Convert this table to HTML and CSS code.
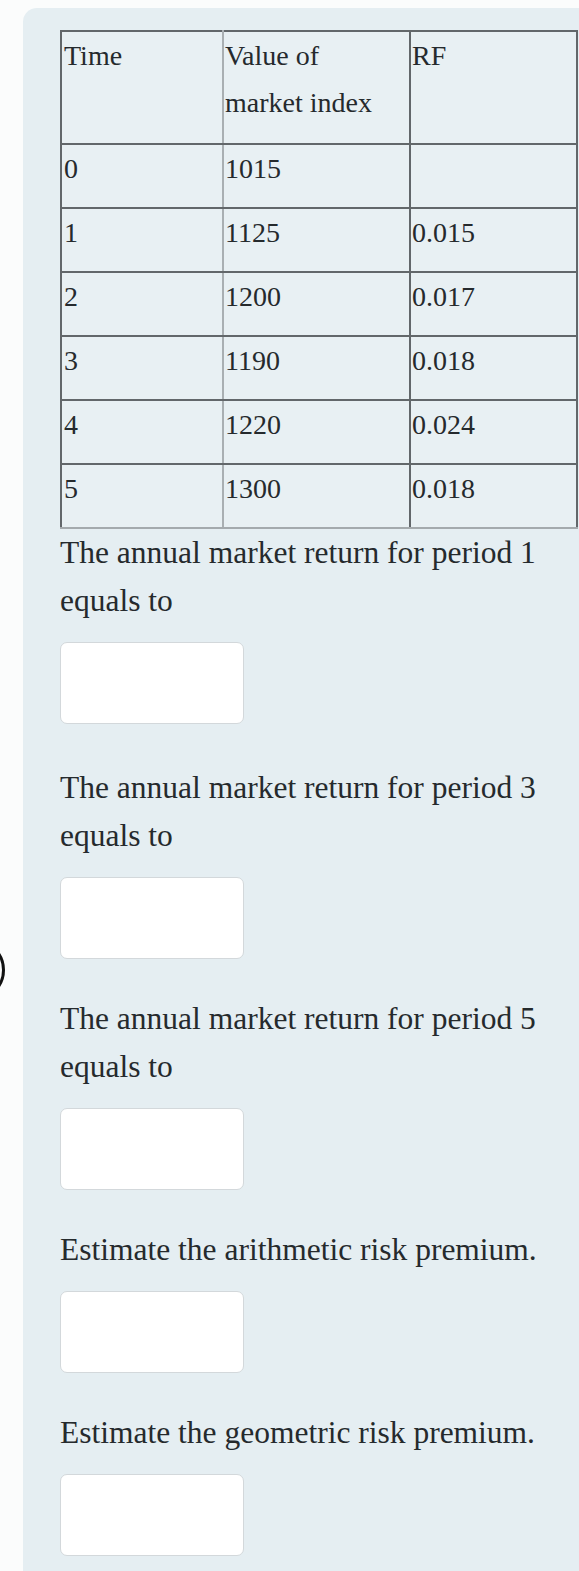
FILE: index.html
```html
<!DOCTYPE html>
<html lang="en">
<head>
    <meta charset="UTF-8">
    <meta name="viewport" content="width=device-width, initial-scale=1.0">
    <title>Market Return Questions</title>
    <link rel="stylesheet" href="styles.css">
</head>
<body>
    <span class="side-radio"></span>

    <div class="panel">
        <table class="data-table">
            <colgroup>
                <col class="col-time">
                <col class="col-value">
                <col class="col-rf">
            </colgroup>
            <tr class="head-row">
                <td class="cell-time">Time</td>
                <td>Value of<br>market index</td>
                <td>RF</td>
            </tr>
            <tr>
                <td class="cell-time">0</td>
                <td>1015</td>
                <td></td>
            </tr>
            <tr>
                <td class="cell-time">1</td>
                <td>1125</td>
                <td>0.015</td>
            </tr>
            <tr>
                <td class="cell-time">2</td>
                <td>1200</td>
                <td>0.017</td>
            </tr>
            <tr>
                <td class="cell-time">3</td>
                <td>1190</td>
                <td>0.018</td>
            </tr>
            <tr>
                <td class="cell-time">4</td>
                <td>1220</td>
                <td>0.024</td>
            </tr>
            <tr>
                <td class="cell-time">5</td>
                <td>1300</td>
                <td>0.018</td>
            </tr>
        </table>

        <div class="question first">
            <p>The annual market return for period 1 equals to</p>
            <input type="text" class="answer">
        </div>

        <div class="question">
            <p>The annual market return for period 3 equals to</p>
            <input type="text" class="answer">
        </div>

        <div class="question">
            <p>The annual market return for period 5 equals to</p>
            <input type="text" class="answer">
        </div>

        <div class="question">
            <p>Estimate the arithmetic risk premium.</p>
            <input type="text" class="answer">
        </div>

        <div class="question">
            <p>Estimate the geometric risk premium.</p>
            <input type="text" class="answer">
        </div>
    </div>
</body>
</html>
```

FILE: styles.css
```css
body {
    margin: 0;
    padding: 0;
    background-color: #fbfcfc;
    font-family: "Liberation Serif", "Times New Roman", serif;
    color: #252a2d;
    overflow: hidden;
}

.panel {
    margin: 8px 0 0 23px;
    padding: 22px 0 40px 37px;
    background-color: #e5eef2;
    border-top-left-radius: 14px;
    min-height: 1520px;
}

/* cut off radio button at the left edge */
.side-radio {
    position: absolute;
    left: -57px;
    top: 939px;
    width: 56px;
    height: 56px;
    border: 3px solid #111;
    border-radius: 50%;
}

.data-table {
    border-collapse: collapse;
    table-layout: fixed;
    width: 518px;
    font-family: "Liberation Serif", "Times New Roman", serif;
    font-size: 28px;
    line-height: 47px;
    color: #252a2d;
    background-color: #e8f0f3;
}

.col-time {
    width: 162px;
}

.col-value {
    width: 187px;
}

.data-table td {
    border: 2px solid #62676a;
    padding: 0 1px 15px 1px;
    vertical-align: top;
    height: 47px;
}

.data-table .head-row td {
    padding-bottom: 17px;
}

.data-table td.cell-time {
    border-right-color: #a9afb2;
    padding-left: 2px;
}

.data-table tr:last-child td {
    border-bottom-color: #a4aaad;
}

.question {
    margin-bottom: 36px;
}

.question.first {
    margin-bottom: 40px;
}

.question p {
    margin: 0;
    font-size: 31.5px;
    line-height: 48px;
}

.answer {
    display: block;
    box-sizing: border-box;
    width: 184px;
    height: 82px;
    margin-top: 17px;
    border: 1.5px solid #d3d8db;
    border-radius: 7px;
    background-color: #fff;
}
```
